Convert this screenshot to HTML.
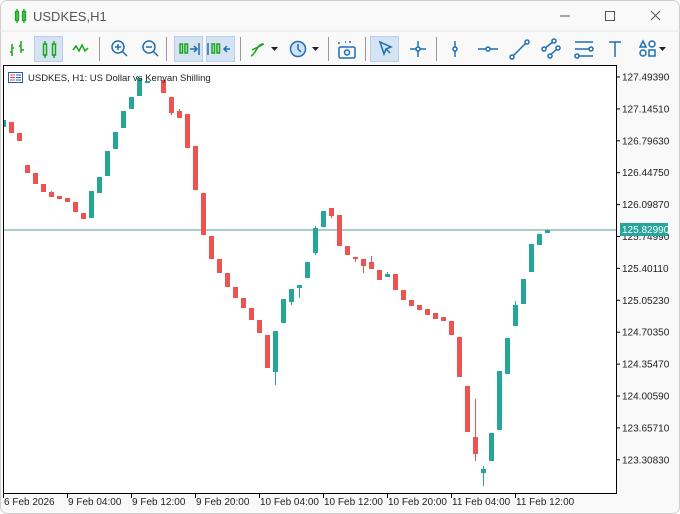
<!DOCTYPE html>
<html><head><meta charset="utf-8"><style>
html,body{margin:0;padding:0;background:#fff}
body{width:680px;height:514px;overflow:hidden;font-family:"Liberation Sans",sans-serif}
.win{position:absolute;left:0;top:0;width:678px;height:512px;border:1px solid #cfcfcf;border-radius:7px;background:#f9f9f9;overflow:hidden}
</style></head><body>
<div class="win"></div>
<svg width="680" height="514" style="position:absolute;left:0;top:0" font-family="Liberation Sans, sans-serif">
<!-- title -->
<g fill="none" stroke="#1aa51a" stroke-width="1.3">
<rect x="15.5" y="11.5" width="3" height="9"/><line x1="17" y1="9" x2="17" y2="23"/>
<rect x="22.5" y="11.5" width="3" height="9"/><line x1="24" y1="9" x2="24" y2="23"/>
</g>
<text x="33" y="21" font-size="13" fill="#555">USDKES,H1</text>
<line x1="560" y1="16" x2="570" y2="16" stroke="#555"/>
<rect x="605.5" y="11.5" width="9" height="9" fill="none" stroke="#555"/>
<path d="M651 11l9 9M660 11l-9 9" stroke="#555"/>
<line x1="0" y1="31" x2="680" y2="31" stroke="#e6e6e6"/>
<!-- toolbar pressed -->
<g fill="#d5e3f3" stroke="#b9cfe8"><rect x="34.5" y="36.5" width="28" height="25"/><rect x="174.5" y="36.5" width="28" height="25"/><rect x="206.5" y="36.5" width="28" height="25"/><rect x="370.5" y="36.5" width="28" height="25"/></g>
<g stroke="#999"><line x1="99.5" y1="37" x2="99.5" y2="61"/><line x1="166.5" y1="37" x2="166.5" y2="61"/><line x1="240.5" y1="37" x2="240.5" y2="61"/><line x1="328.5" y1="37" x2="328.5" y2="61"/><line x1="365.5" y1="37" x2="365.5" y2="61"/><line x1="436.5" y1="37" x2="436.5" y2="61"/></g>
<g fill="none" stroke="#1aa51a" stroke-width="1.5">
<path d="M12 44v12M10 52h2M12 48h2M21 41v12M19 46h2M21 50h3"/>
<rect x="43.5" y="44" width="3" height="11"/><path d="M45 41v3M45 55v3"/><rect x="52.5" y="44" width="3" height="11"/><path d="M54 41v3M54 55v3"/>
<path d="M73 50l3-4 3 5 3-6 3 6 3-3"/>
<rect x="180" y="44" width="2.5" height="9"/><rect x="185" y="44" width="2.5" height="9"/>
<rect x="212" y="44" width="2.5" height="9"/><rect x="217" y="44" width="2.5" height="9"/>
<path d="M251 56c5-2 6-12 12-12M252 50l12-6" stroke="#1aa51a"/>
</g>
<g fill="none" stroke="#1e6fb5" stroke-width="1.5">
<circle cx="118" cy="47" r="6"/><path d="M122 51l5 5M115 47h6M118 44v6"/>
<circle cx="149" cy="47" r="6"/><path d="M153 51l5 5M146 47h6"/>
<path d="M190 49h6M194 46l3 3-3 3M199 43v12"/>
<path d="M224 49h6M227 46l-3 3 3 3"/><path d="M208 43v12" stroke="#1e6fb5"/>
<circle cx="298" cy="49" r="7.5" fill="#cfe3f6"/><path d="M298 44v5l3 3"/>
<path d="M339 44v-2h2M349 42h2v2M345 42h1" stroke-dasharray="2 2"/><rect x="339" y="47" width="16" height="11" rx="1.5"/><circle cx="347" cy="52.5" r="2.5"/>
<path d="M380 42l4 12 2-5 5-2z"/><path d="M386 49l4 4"/>
<path d="M418 41v16M410 49h16"/><circle cx="418" cy="49" r="2" fill="#fff"/>
<path d="M455 41v16"/><circle cx="455" cy="49" r="2" fill="#fff"/>
<path d="M478 49h20"/><circle cx="488" cy="49" r="2" fill="#fff"/>
<path d="M512 57l16-16"/><circle cx="512" cy="57" r="2" fill="#fff"/><circle cx="527" cy="42" r="2" fill="#fff"/>
<path d="M544 49l10-8M548 57l10-9"/><circle cx="544" cy="49" r="2" fill="#fff"/><circle cx="554" cy="41" r="2" fill="#fff"/><circle cx="550" cy="56" r="2" fill="#fff"/><circle cx="558" cy="48" r="2" fill="#fff"/>
<path d="M575 42h18M575 49h14M575 56h18"/><circle cx="591" cy="49" r="2" fill="#fff"/><circle cx="577" cy="56" r="2" fill="#fff"/>
<path d="M609 42h12M615 42v15"/>
<path d="M640 47l3-6 3 6z"/><circle cx="652" cy="44" r="3"/><circle cx="643" cy="53" r="3"/><rect x="649" y="50" width="6" height="6"/>
</g>
<g fill="#222"><path d="M271 47h7l-3.5 4z"/><path d="M312 47h7l-3.5 4z"/><path d="M659 47h7l-3.5 4z"/></g>
<!-- chart -->
<rect x="3.5" y="65.5" width="613" height="428" fill="#fff" stroke="#000"/>
<line x1="4" y1="230" x2="616" y2="230" stroke="#4f9c95"/>
<g id="c"></g>
<g fill="#e24a4a" stroke="#2460b0" stroke-width="1"><rect x="8.5" y="72.5" width="14" height="10" fill="#fff"/></g>
<path d="M10 75h5M10 77.5h5M10 80h5" stroke="#e24a4a"/><path d="M16 75h5M16 77.5h5M16 80h5" stroke="#2460b0"/>
<text x="28" y="81" font-size="9.5" fill="#222">USDKES, H1:  US Dollar vs Kenyan Shilling</text>
<g id="ax" font-size="10" fill="#222"></g>
<rect x="620" y="223" width="48" height="13" fill="#26a69a"/>
<text x="622" y="233" font-size="10" fill="#fff">125.82990</text>
</svg>
<script>
var d=[[1,120,127,1],[9,122,133,0],[17,133,141,0],[25,165,173,0],[33,173,184,0],[41,184,192,0],[49,192,197,0,191],[57,196,199,0],[65,198,202,0],[73,202,212,0],[81,213,219,0],[89,191,218,1],[97,177,193,1],[105,151,176,1],[113,132,149,1],[121,111,128,1],[129,97,109,1],[137,78,96,1],[145,81,83,1],[161,80,93,0],[169,97,113,0,97,115],[177,111,118,0,109],[185,114,148,0],[193,146,190,0],[201,193,235,0],[209,236,259,0],[217,259,273,0],[225,273,287,0],[233,287,298,0],[241,298,308,0],[249,308,320,0],[257,320,333,0],[265,335,368,0],[273,331,372,1,331,385],[281,299,323,1],[289,289,302,1,289,305],[297,285,288,1,285,298],[305,262,278,1],[313,228,253,1,226,255],[321,211,227,1],[329,208,216,0,208,218],[337,215,246,0],[345,246,255,0],[353,257,259,0,257,262],[361,259,266,0,259,273],[369,262,269,0,256],[377,270,280,0],[385,274,277,1,272],[393,274,290,0],[401,290,300,0],[409,300,306,0],[417,305,310,0],[425,309,315,0],[433,313,319,0],[441,317,321,0],[449,321,335,0],[457,337,377,0],[465,386,432,0],[473,437,454,0,399,461],[481,469,473,1,466,486],[489,433,461,1],[497,371,430,1],[505,338,374,1],[513,305,326,1,301],[521,279,304,1],[529,244,272,1],[537,234,245,1],[545,230,233,1]];
var s='';d.forEach(function(c){var col=c[3]?'#26a69a':'#ef5350';var x=Math.max(c[0],4),w=c[0]+5-x;var t=c[4]||c[1],b=c[5]||c[2];if(t<c[1]||b>c[2])s+='<line x1="'+(c[0]+2.5)+'" y1="'+t+'" x2="'+(c[0]+2.5)+'" y2="'+b+'" stroke="'+col+'"/>';s+='<rect x="'+x+'" y="'+c[1]+'" width="'+w+'" height="'+Math.max(c[2]-c[1],2)+'" fill="'+col+'"/>';});
document.getElementById('c').innerHTML=s;
var p=['127.49390','127.14510','126.79630','126.44750','126.09870','125.74990','125.40110','125.05230','124.70350','124.35470','124.00590','123.65710','123.30830'];var a='';
p.forEach(function(v,i){var y=77+i*31.9;a+='<line x1="616" y1="'+y+'" x2="620" y2="'+y+'" stroke="#000"/><text x="622" y="'+(y+3.5)+'">'+v+'</text>';});
var t=['6 Feb 2026','9 Feb 04:00','9 Feb 12:00','9 Feb 20:00','10 Feb 04:00','10 Feb 12:00','10 Feb 20:00','11 Feb 04:00','11 Feb 12:00'];
t.forEach(function(v,i){var x=3.5+i*64;a+='<line x1="'+x+'" y1="493" x2="'+x+'" y2="498" stroke="#000"/><text x="'+(x+0.5)+'" y="505">'+v+'</text>';});
document.getElementById('ax').innerHTML=a;
</script>
</body></html>
